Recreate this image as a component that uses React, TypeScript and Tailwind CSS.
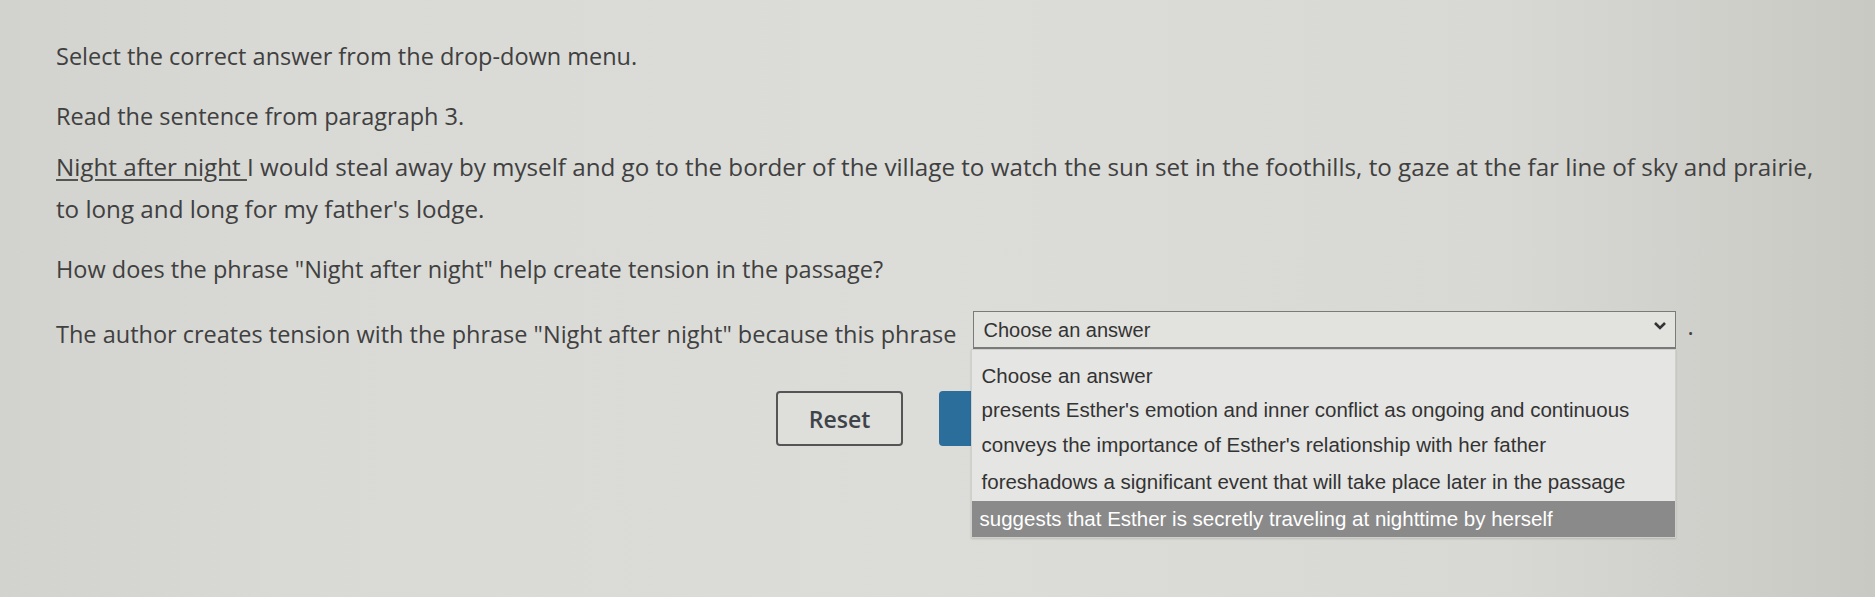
import React from "react";

const options = [
  { t: "Choose an answer", h: "h-[33px]" },
  { t: "presents Esther's emotion and inner conflict as ongoing and continuous", h: "h-[34px]" },
  { t: "conveys the importance of Esther's relationship with her father", h: "h-[37px]" },
  { t: "foreshadows a significant event that will take place later in the passage", h: "h-[37px]" },
];

export default function App() {
  return (
    <div className="w-[1875px] h-[597px] overflow-hidden bg-[linear-gradient(90deg,#d2d2ce_0%,#d9d9d6_15%,#dcdcd9_50%,#d8d8d4_80%,#c9c9c4_100%)] text-[#404040] font-['Open_Sans',sans-serif] text-[23.5px] leading-[42px]">
      <div className="pl-[56px] pt-[35px]">
        <p>Select the correct answer from the drop-down menu.</p>
        <p className="mt-[18px]">Read the sentence from paragraph 3.</p>
        <p className="mt-[9px] text-[24.2px]">
          <span className="underline underline-offset-[3px] decoration-[#555]">Night after night </span>I would steal away by myself and go to the border of the village to watch the sun set in the foothills, to gaze at the far line of sky and prairie,
          <br />
          to long and long for my father's lodge.
        </p>
        <p className="mt-[18px]">How does the phrase "Night after night" help create tension in the passage?</p>
        <div className="mt-[23px] flex items-start">
          <span>The author creates tension with the phrase "Night after night" because this phrase</span>
          <div className="relative ml-[16px] mt-[-2px]">
            <div className="w-[703px] h-[38px] border border-[#7a7a7a] border-b-2 bg-[#e2e2df] flex items-center justify-between pl-[10px] pr-[8px] font-['Liberation_Sans',Arial,sans-serif] text-[20px] leading-none text-[#333]">
              <span>Choose an answer</span>
              <svg width="14" height="10" viewBox="0 0 14 10" className="mt-[-8px]">
                <polyline points="2,2 7,7 12,2" fill="none" stroke="#333" strokeWidth="2.6" />
              </svg>
            </div>
            <div className="absolute left-[-2px] top-[38px] w-[705px] bg-[#e5e5e3] border border-[#cfcfcc] pt-[10px] font-['Liberation_Sans',Arial,sans-serif] text-[20.5px] leading-none text-[#333] shadow-[0_1px_2px_rgba(0,0,0,0.15)] z-10">
              {options.map((o) => (
                <div key={o.t} className={`${o.h} flex items-center pl-[10px]`}>
                  {o.t}
                </div>
              ))}
              <div className="h-[36px] flex items-center pl-[8px] bg-[#8a8a8a] text-white">
                suggests that Esther is secretly traveling at nighttime by herself
              </div>
            </div>
          </div>
          <span className="ml-[12px] mt-[-8px]">.</span>
        </div>
        <div className="mt-[36px] flex gap-[36px] pl-[720px]">
          <button className="w-[127px] h-[55px] border-2 border-[#555] rounded-[4px] bg-[#dededb] text-[#3d4349] font-semibold text-[23px] font-['Open_Sans',sans-serif]">
            Reset
          </button>
          <button className="w-[127px] h-[55px] rounded-[4px] bg-[#2b6e9c]" />
        </div>
      </div>
    </div>
  );
}
